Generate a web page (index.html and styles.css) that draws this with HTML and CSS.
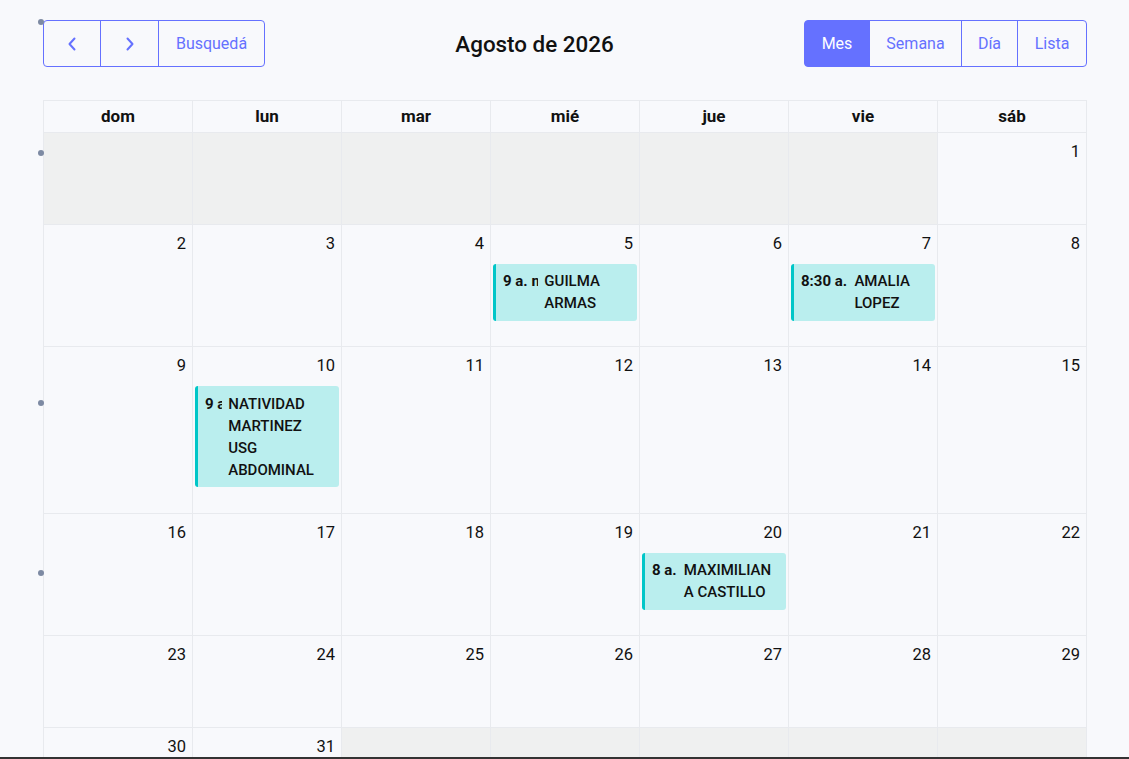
FILE: index.html
```
<!DOCTYPE html>
<html lang="es">
<head>
<meta charset="utf-8">
<title>Calendario</title>
<link rel="stylesheet" href="styles.css">
</head>
<body>
<div class="page">
  <div class="toolbar">
    <div class="btn-group">
      <button class="btn btn-icon" aria-label="Anterior">
        <svg width="14" height="16" viewBox="0 0 14 16"><path d="M9.5 2.5 L4.5 8 L9.5 13.5" fill="none" stroke="#6571ff" stroke-width="2" stroke-linecap="round" stroke-linejoin="round"/></svg>
      </button>
      <button class="btn btn-icon" aria-label="Siguiente">
        <svg width="14" height="16" viewBox="0 0 14 16"><path d="M4.5 2.5 L9.5 8 L4.5 13.5" fill="none" stroke="#6571ff" stroke-width="2" stroke-linecap="round" stroke-linejoin="round"/></svg>
      </button>
      <button class="btn btn-search">Busquedá</button>
    </div>
    <h2 class="title">Agosto de 2026</h2>
    <div class="btn-group">
      <button class="btn btn-view active">Mes</button>
      <button class="btn btn-view">Semana</button>
      <button class="btn btn-view">Día</button>
      <button class="btn btn-view">Lista</button>
    </div>
  </div>

  <div class="calendar">
    <div class="week head">
      <div class="hcell">dom</div><div class="hcell">lun</div><div class="hcell">mar</div><div class="hcell">mié</div><div class="hcell">jue</div><div class="hcell">vie</div><div class="hcell">sáb</div>
    </div>
    <div class="week">
      <div class="cell other"></div><div class="cell other"></div><div class="cell other"></div><div class="cell other"></div><div class="cell other"></div><div class="cell other"></div>
      <div class="cell"><div class="num">1</div></div>
    </div>
    <div class="week">
      <div class="cell"><div class="num">2</div></div>
      <div class="cell"><div class="num">3</div></div>
      <div class="cell"><div class="num">4</div></div>
      <div class="cell"><div class="num">5</div>
        <div class="event"><span class="time">9 a. m.</span><span class="name">GUILMA ARMAS</span></div>
      </div>
      <div class="cell"><div class="num">6</div></div>
      <div class="cell"><div class="num">7</div>
        <div class="event"><span class="time">8:30 a. m.</span><span class="name">AMALIA LOPEZ</span></div>
      </div>
      <div class="cell"><div class="num">8</div></div>
    </div>
    <div class="week">
      <div class="cell"><div class="num">9</div></div>
      <div class="cell"><div class="num">10</div>
        <div class="event"><span class="time">9 a. m.</span><span class="name">NATIVIDAD MARTINEZ USG ABDOMINAL</span></div>
      </div>
      <div class="cell"><div class="num">11</div></div>
      <div class="cell"><div class="num">12</div></div>
      <div class="cell"><div class="num">13</div></div>
      <div class="cell"><div class="num">14</div></div>
      <div class="cell"><div class="num">15</div></div>
    </div>
    <div class="week">
      <div class="cell"><div class="num">16</div></div>
      <div class="cell"><div class="num">17</div></div>
      <div class="cell"><div class="num">18</div></div>
      <div class="cell"><div class="num">19</div></div>
      <div class="cell"><div class="num">20</div>
        <div class="event"><span class="time">8 a. m.</span><span class="name">MAXIMILIANA CASTILLO</span></div>
      </div>
      <div class="cell"><div class="num">21</div></div>
      <div class="cell"><div class="num">22</div></div>
    </div>
    <div class="week">
      <div class="cell"><div class="num">23</div></div>
      <div class="cell"><div class="num">24</div></div>
      <div class="cell"><div class="num">25</div></div>
      <div class="cell"><div class="num">26</div></div>
      <div class="cell"><div class="num">27</div></div>
      <div class="cell"><div class="num">28</div></div>
      <div class="cell"><div class="num">29</div></div>
    </div>
    <div class="week">
      <div class="cell"><div class="num">30</div></div>
      <div class="cell"><div class="num">31</div></div>
      <div class="cell other"></div><div class="cell other"></div><div class="cell other"></div><div class="cell other"></div><div class="cell other"></div>
    </div>
  </div>
</div>
<span class="dot dot1"></span>
<span class="dot dot2"></span>
<span class="dot dot3"></span>
<span class="dot dot4"></span>
<div class="bottom-line"></div>
</body>
</html>
```
FILE: styles.css
```
* { box-sizing: border-box; }
html, body {
  margin: 0;
  padding: 0;
  background: #f8f9fc;
  font-family: Roboto, "Liberation Sans", sans-serif;
  color: #1a1a1a;
}
.page {
  padding: 20px 42px 0 43px;
}
.toolbar {
  display: flex;
  align-items: center;
  justify-content: space-between;
  height: 47px;
  margin-bottom: 33px;
}
.btn-group {
  display: flex;
  height: 47px;
}
.btn {
  font-family: Roboto, "Liberation Sans", sans-serif;
  font-size: 16px;
  color: #6571ff;
  background: transparent;
  border: 1px solid #6571ff;
  margin: 0;
  margin-left: -1px;
  padding: 0;
  height: 47px;
  display: flex;
  align-items: center;
  justify-content: center;
  cursor: pointer;
}
.btn:first-child { margin-left: 0; border-radius: 4px 0 0 4px; }
.btn:last-child { border-radius: 0 4px 4px 0; }
.btn-icon { width: 59px; }
.btn-icon:first-child { width: 58px; }
.btn-search { width: 107px; }
.btn-view.active { background: #6571ff; color: #fff; width: 66px; }
.btn-view:nth-child(2) { width: 93px; }
.btn-view:nth-child(3) { width: 57px; }
.btn-view:nth-child(4) { width: 70px; }
.title {
  margin: 0;
  font-size: 22.4px;
  font-weight: 500;
  color: #111;
}
.calendar {
  border-left: 1px solid #e8eaee;
  border-top: 1px solid #e8eaee;
}
.week {
  display: grid;
  grid-template-columns: repeat(7, minmax(0, 1fr));
}
.hcell {
  height: 32px;
  line-height: 31px;
  text-align: center;
  font-weight: 700;
  font-size: 17px;
  color: #111;
  border-right: 1px solid #e8eaee;
  border-bottom: 1px solid #e8eaee;
}
.cell {
  min-height: 91.5px;
  border-right: 1px solid #e8eaee;
  border-bottom: 1px solid #e8eaee;
  padding: 0 2px 25.5px 2px;
}
.cell.other { background: #eff0f0; }
.num {
  text-align: right;
  font-size: 16.5px;
  line-height: 24px;
  padding: 7px 4px 8px 0;
  color: #111;
}
.event {
  display: flex;
  gap: 6px;
  background: #baeeee;
  border-left: 3px solid #00c6c8;
  border-radius: 3px;
  padding: 6.5px 7px 6.5px 7px;
  font-size: 15px;
  line-height: 22px;
  color: #111;
}
.time {
  font-weight: 700;
  white-space: nowrap;
  overflow: hidden;
  flex: 0 1 auto;
  min-width: 0;
}
.name {
  font-weight: 500;
  flex: 0 1 auto;
  min-width: 0;
  overflow-wrap: anywhere;
}
.dot {
  position: absolute;
  left: 38px;
  width: 6px;
  height: 6px;
  border-radius: 50%;
  background: #7d8aa3;
}
.dot1 { top: 19px; }
.dot2 { top: 150px; }
.dot3 { top: 400px; }
.dot4 { top: 570px; }
.bottom-line {
  position: fixed;
  left: 0;
  right: 0;
  bottom: 0;
  height: 2px;
  background: #333;
}
```
